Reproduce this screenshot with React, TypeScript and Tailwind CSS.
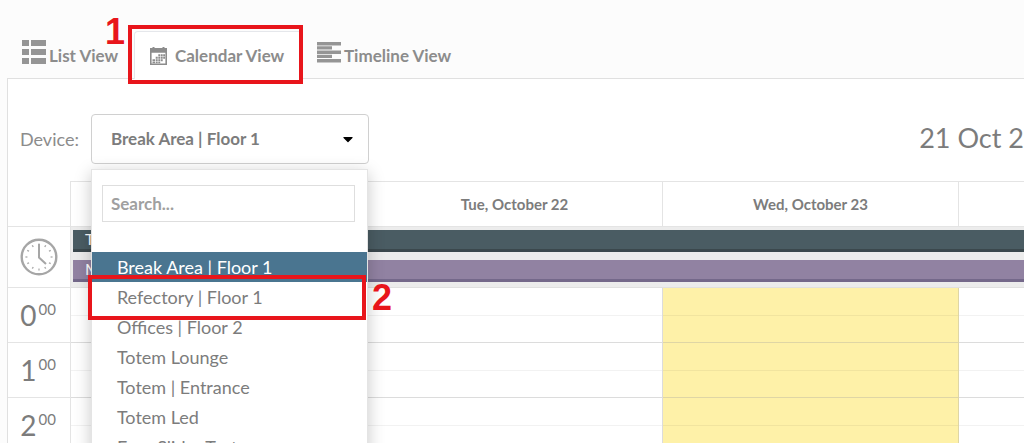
import { FaCaretDown } from "react-icons/fa";

const options = [
  "Break Area | Floor 1",
  "Refectory | Floor 1",
  "Offices | Floor 2",
  "Totem Lounge",
  "Totem | Entrance",
  "Totem Led",
  "Easy Slider Test",
];

const days = ["", "Tue, October 22", "Wed, October 23", ""];

const hours = ["0", "1", "2"];

function ListIcon() {
  return (
    <svg width="24" height="24" viewBox="0 0 24 24" fill="#959595">
      <path d="M0 0h7v6H0zM9 0h15v6H9zM0 9h7v6H0zM9 9h15v6H9zM0 18h7v6H0zM9 18h15v6H9z" />
    </svg>
  );
}

function CalendarIcon() {
  return (
    <svg width="17" height="18" viewBox="0 0 17 18" fill="#8c8c8c">
      <path d="M0 1h2.500V0h2v1h8V0h2v1H17v4H0z" />
      <path d="M.8 5h15.400v12.200H.8z" fill="none" stroke="#8c8c8c" strokeWidth="1.600" />
      <path d="M8.300 7.300h1.900v1.900H8.300zM10.800 7.300h1.900v1.900h-1.900zM13.200 7.300H15v1.900h-1.800zM5.700 9.800h2v2h-2zM8.300 9.800h1.900v2H8.300zM10.800 9.800h1.900v2h-1.900zM13.200 9.800H15v2h-1.800zM2.500 12.300h2.500v2H2.500zM5.700 12.300h2v2h-2zM8.300 12.300h1.900v2H8.300zM10.800 12.300h1.900v2h-1.900zM2.500 14.800h2.500v1.500H2.500zM5.700 14.800h2v1.500h-2zM8.300 14.800h1.900v1.500H8.300z" />
    </svg>
  );
}

function TimelineIcon() {
  return (
    <svg width="24" height="21" viewBox="0 0 24 21" fill="#959595">
      <path d="M0 0h24v3.500H0zM0 4.300h15v3.300H0zM0 8.500h24v3.500H0zM0 12.800h15v3.300H0zM0 17h24v3.500H0z" />
    </svg>
  );
}

function ClockIcon() {
  return (
    <svg width="38" height="38" viewBox="0 0 38 38" fill="none" stroke="#a6a6a6">
      <circle cx="19" cy="19" r="17.300" strokeWidth="2.400" />
      <circle
        cx="19"
        cy="19"
        r="12.500"
        strokeWidth="2"
        pathLength="120"
        strokeDasharray="2 8"
        strokeDashoffset="1"
      />
      <path d="M19 6v13.500l7 6.500" strokeWidth="2" />
    </svg>
  );
}

function Tabs() {
  return (
    <nav className="flex items-end pl-[22px] pt-[30px] text-[17px] font-bold text-[#8c8c8c]">
      <a href="#list" className="flex h-12 w-28 items-start gap-[3px] pt-[10px]">
        <ListIcon />
        <span className="mt-[3px] whitespace-nowrap">List View</span>
      </a>
      <a
        href="#calendar"
        className="-mb-px flex h-12 w-[168px] items-center gap-2 rounded-t border border-b-0 border-gray-200 bg-white pl-[15px]"
      >
        <CalendarIcon />
        <span className="whitespace-nowrap">Calendar View</span>
      </a>
      <a href="#timeline" className="ml-[15px] flex h-12 items-start gap-[3px] pt-3">
        <TimelineIcon />
        <span className="mt-px whitespace-nowrap">Timeline View</span>
      </a>
    </nav>
  );
}

function DeviceSelect() {
  return (
    <div className="relative w-[278px]">
      <button
        id="device"
        type="button"
        aria-haspopup="listbox"
        aria-expanded="true"
        className="flex h-[50px] w-full items-center justify-between rounded border border-[#d0d0d0] bg-white pl-[19px] pr-3 text-[17px] font-bold text-[#7c7c7c]"
      >
        Break Area | Floor 1
        <FaCaretDown className="text-base text-black" />
      </button>
      <div className="absolute left-0 top-[55px] z-10 w-[277px] border border-[#e4e4e4] bg-white shadow-[0_4px_16px_rgba(0,0,0,0.22)]">
        <div className="pb-[30px] pl-[10px] pr-3 pt-[15px]">
          <input
            type="text"
            aria-label="Search devices"
            placeholder="Search..."
            className="h-[37px] w-full border border-[#dedede] px-2 text-[17px] font-bold placeholder:text-[#a0a0a0]"
          />
        </div>
        <ul role="listbox" aria-labelledby="device">
          {options.map((name, i) => (
            <li
              key={name}
              role="option"
              aria-selected={i === 0}
              className={
                i === 0
                  ? "h-[30px] bg-[#4a7590] pl-[25px] text-lg leading-[30px] text-white"
                  : "h-[30px] pl-[25px] text-lg leading-[30px] text-[#7c7c7c]"
              }
            >
              {name}
            </li>
          ))}
        </ul>
      </div>
    </div>
  );
}

function Calendar() {
  return (
    <div className="overflow-hidden">
      <table className="w-[1247px] table-fixed border-separate border-spacing-0">
        <colgroup>
          <col className="w-[63px]" />
          <col />
          <col />
          <col />
          <col />
        </colgroup>
        <thead>
          <tr className="h-[46px] text-[15px] text-[#7c7c7c]">
            <td className="border-b border-r border-[#e4e4e4]" />
            {days.map((day, i) => (
              <th key={i} className="border-b border-r border-t border-[#e4e4e4] p-0">
                {day}
              </th>
            ))}
          </tr>
        </thead>
        <tbody>
          <tr className="h-[61px]">
            <td className="border-b border-r border-[#e4e4e4] p-0">
              <div className="flex justify-center">
                <ClockIcon />
              </div>
            </td>
            <td colSpan={4} className="border-b border-[#e0e0e0] bg-[#ececec] p-0 align-top">
              <div className="flex flex-col gap-2 pl-[2px] pt-[3px] text-base leading-[18px] text-white">
                <div className="h-[22px] border-b-[3px] border-[#3b484d] bg-[#4a5c63] pl-3">T</div>
                <div className="h-[22px] border-b-[3px] border-[#74688a] bg-[#9182a2] pl-3">M</div>
              </div>
            </td>
          </tr>
          {hours.map((hour) => (
            <tr key={hour} className="h-[55px]">
              <th className="border-b border-r border-[#e4e4e4] p-0 font-normal text-[#7c7c7c]">
                <div className="flex items-start justify-end gap-[2px] pr-[14px]">
                  <span className="text-[28px] leading-9">{hour}</span>
                  <span className="text-[15px] leading-6">00</span>
                </div>
              </th>
              {days.map((_, i) => (
                <td
                  key={i}
                  className={
                    i === 2
                      ? "border-b border-r border-[#dfd6a5] bg-[#fef1a8] p-0 align-top"
                      : "border-b border-r border-[#dcdcdc] p-0 align-top"
                  }
                >
                  <div className="h-7 border-b border-black/5" />
                </td>
              ))}
            </tr>
          ))}
        </tbody>
      </table>
    </div>
  );
}

function Annotations() {
  return (
    <div className="pointer-events-none font-['Liberation_Sans',sans-serif] text-4xl leading-8 font-bold text-[#e8151b]">
      <div className="absolute left-32 top-[25px] z-20 h-[59px] w-[175px] border-4 border-[#e8151b]" />
      <span className="absolute left-[105px] top-4 z-20">1</span>
      <div className="absolute left-[88px] top-[275px] z-20 h-[45px] w-[278px] border-4 border-[#e8151b]" />
      <span className="absolute left-[372px] top-[282px] z-20">2</span>
    </div>
  );
}

function App() {
  return (
    <div className="relative h-screen overflow-hidden bg-[#fcfcfc] font-[Lato,sans-serif]">
      <Tabs />
      <main className="ml-[7px] min-h-full border-l border-t border-[#e0e0e0] bg-white">
        <div className="flex h-[102px] items-start justify-between pl-3 pt-[35px]">
          <div className="flex items-center gap-3">
            <label htmlFor="device" className="text-lg text-[#8c8c8c]">
              Device:
            </label>
            <DeviceSelect />
          </div>
          <h2 className="whitespace-nowrap pt-1 text-[27px] text-[#7c7c7c]">21 Oct 2</h2>
        </div>
        <Calendar />
      </main>
      <Annotations />
    </div>
  );
}

export default App;
